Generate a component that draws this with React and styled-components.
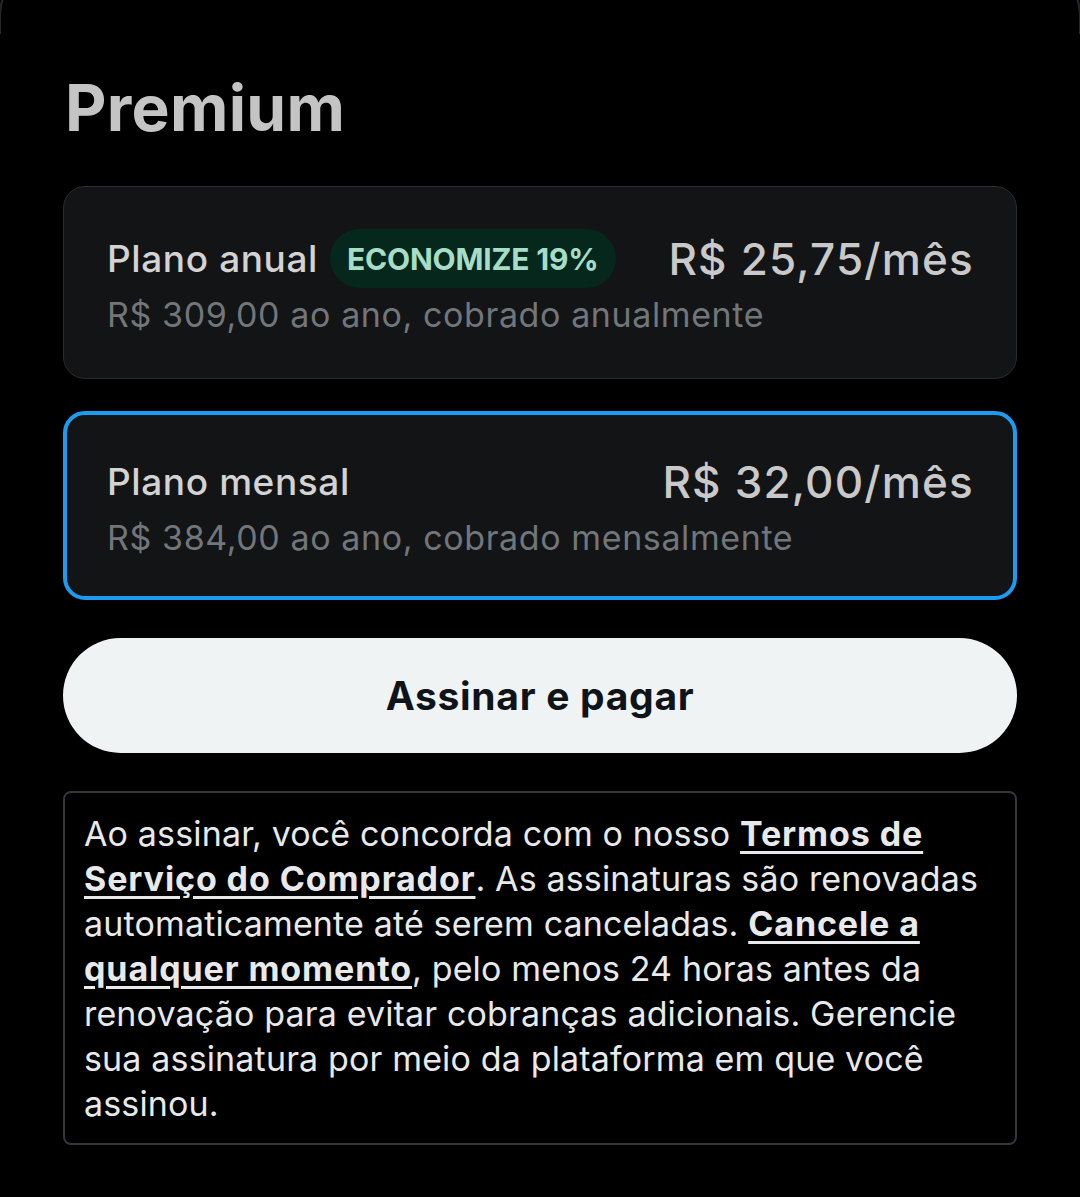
import React from 'react';
import styled, { createGlobalStyle } from 'styled-components';

const GlobalStyle = createGlobalStyle`
  html, body {
    margin: 0;
    padding: 0;
    background: #000000;
  }
  body {
    font-family: Inter, "Noto Sans", "Liberation Sans", sans-serif;
    -webkit-font-smoothing: antialiased;
  }
`;

const plans = [
  {
    id: 'annual',
    name: 'Plano anual',
    badge: 'ECONOMIZE 19%',
    price: 'R$ 25,75/mês',
    detail: 'R$ 309,00 ao ano, cobrado anualmente',
  },
  {
    id: 'monthly',
    name: 'Plano mensal',
    price: 'R$ 32,00/mês',
    detail: 'R$ 384,00 ao ano, cobrado mensalmente',
  },
];

const App = () => {
  const selected = 'monthly';

  return (
    <>
      <GlobalStyle />
      <Sheet>
        <Title>Premium</Title>
        <PlanList>
          {plans.map((plan) => (
            <PlanCard key={plan.id} $selected={plan.id === selected}>
              <PlanRow>
                <PlanName>
                  {plan.name}
                  {plan.badge && <Badge>{plan.badge}</Badge>}
                </PlanName>
                <Price>{plan.price}</Price>
              </PlanRow>
              <PlanDetail>{plan.detail}</PlanDetail>
            </PlanCard>
          ))}
        </PlanList>
        <SubscribeButton>Assinar e pagar</SubscribeButton>
        <Terms>
          Ao assinar, você concorda com o nosso <TermsLink>Termos de<br />Serviço do Comprador</TermsLink>. As assinaturas são renovadas<br />
          automaticamente até serem canceladas. <TermsLink>Cancele a<br />qualquer momento</TermsLink>, pelo menos 24 horas antes da<br />
          renovação para evitar cobranças adicionais. Gerencie<br />
          sua assinatura por meio da plataforma em que você<br />
          assinou.
        </Terms>
      </Sheet>
    </>
  );
};

export default App;

const Sheet = styled.div`
  position: relative;
  display: flex;
  flex-direction: column;
  width: 1080px;
  min-height: 1197px;
  box-sizing: border-box;
  padding: 66px 63px 0 63px;
  background: #000000;
  overflow: hidden;

  /* edge of the sheet behind, peeking at the top corners */
  &::before {
    content: '';
    position: absolute;
    top: -40px;
    left: -1px;
    right: -1px;
    height: 72px;
    border: 2px solid #262728;
    border-bottom: none;
    border-radius: 56px 56px 0 0;
  }
`;

const Title = styled.h1`
  margin: 0 0 0 2px;
  font-size: 64px;
  font-weight: 700;
  line-height: 84px;
  color: #c4c4c4;
  letter-spacing: 0.3px;
`;

const PlanList = styled.div`
  display: flex;
  flex-direction: column;
  gap: 32px;
  margin-top: 36px;
`;

const PlanCard = styled.div`
  display: flex;
  flex-direction: column;
  justify-content: center;
  box-sizing: border-box;
  height: ${(p) => (p.$selected ? '189px' : '193px')};
  padding: ${(p) => (p.$selected ? '0 39px 0 40px' : '0 42px 0 43px')};
  border-radius: 22px;
  background: #131416;
  border: ${(p) => (p.$selected ? '4px solid #1d9bf0' : '1px solid #2a2c2f')};
`;

const PlanRow = styled.div`
  display: flex;
  align-items: center;
  justify-content: space-between;
  height: 60px;
`;

const PlanName = styled.div`
  display: flex;
  align-items: center;
  gap: 12px;
  font-size: 37px;
  font-weight: 500;
  letter-spacing: 0.6px;
  color: #d3d3d3;
`;

const Badge = styled.span`
  display: inline-flex;
  align-items: center;
  height: 59px;
  padding: 0 18px 0 17px;
  border-radius: 30px;
  background: #06271b;
  color: #a6ddc6;
  font-size: 30px;
  font-weight: 700;
  letter-spacing: -0.2px;
`;

const Price = styled.div`
  font-size: 44px;
  font-weight: 500;
  letter-spacing: 1.2px;
  color: #c9c9c9;
`;

const PlanDetail = styled.div`
  margin-top: 4px;
  font-size: 34px;
  line-height: 44px;
  letter-spacing: 0.6px;
  color: #71767b;
`;

const SubscribeButton = styled.button`
  margin-top: 38px;
  height: 115px;
  border: none;
  border-radius: 58px;
  background: #eff3f4;
  color: #0f1419;
  font-family: inherit;
  font-size: 39px;
  font-weight: 700;
  letter-spacing: 0.7px;
  cursor: pointer;
`;

const Terms = styled.div`
  margin-top: 38px;
  padding: 18px 19px 17px 19px;
  border: 2px solid #333639;
  border-radius: 8px;
  font-size: 34px;
  line-height: 45px;
  letter-spacing: 0.15px;
  color: #e7e9ea;
`;

const TermsLink = styled.a`
  font-weight: 700;
  letter-spacing: 0.9px;
  color: #e7e9ea;
  text-decoration: underline;
  text-underline-offset: 5px;
  text-decoration-thickness: 3px;
  cursor: pointer;
`;
